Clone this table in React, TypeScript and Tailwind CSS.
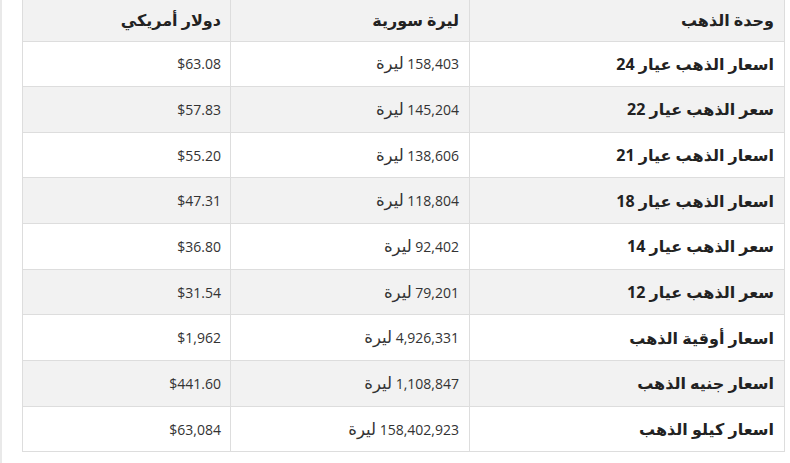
const rows = [
  { unit: "اسعار الذهب عيار 24", syp: "158,403", usd: "$63.08" },
  { unit: "سعر الذهب عيار 22", syp: "145,204", usd: "$57.83" },
  { unit: "اسعار الذهب عيار 21", syp: "138,606", usd: "$55.20" },
  { unit: "اسعار الذهب عيار 18", syp: "118,804", usd: "$47.31" },
  { unit: "سعر الذهب عيار 14", syp: "92,402", usd: "$36.80" },
  { unit: "سعر الذهب عيار 12", syp: "79,201", usd: "$31.54" },
  { unit: "اسعار أوقية الذهب", syp: "4,926,331", usd: "$1,962" },
  { unit: "اسعار جنيه الذهب", syp: "1,108,847", usd: "$441.60" },
  { unit: "اسعار كيلو الذهب", syp: "158,402,923", usd: "$63,084" },
];

export default function App() {
  return (
    <div
      className="h-[463px] w-[790px] overflow-hidden bg-white border-l-2 border-[#e9e9e9] text-[#222]"
      style={{ fontFamily: '"Open Sans", "DejaVu Sans", sans-serif' }}
    >
      <div className="pl-[20px]">
        <table dir="rtl" className="w-[763px] table-fixed border-collapse text-[14px]">
          <thead>
            <tr className="h-[41px] bg-[#f2f2f2]">
              <th className="w-[315px] border-x border-b border-[#dddddd] px-[10px] text-right text-[16px] font-bold">وحدة الذهب</th>
              <th className="w-[239px] border-x border-b border-[#dddddd] px-[10px] text-right text-[16px] font-bold">ليرة سورية</th>
              <th className="border-x border-b border-[#dddddd] px-[9px] text-right text-[16px] font-bold">دولار أمريكي</th>
            </tr>
          </thead>
          <tbody>
            {rows.map((r, i) => (
              <tr key={r.unit} className={i % 2 === 1 ? "h-[45.67px] bg-[#f2f2f2]" : "h-[45.67px] bg-white"}>
                <td className="border border-[#dddddd] px-[10px] text-right text-[16px] font-bold">{r.unit}</td>
                <td className="border border-[#dddddd] px-[10px] text-right text-[#333]">
                  {r.syp} <span className="text-[16.5px]">ليرة</span>
                </td>
                <td className="border border-[#dddddd] px-[9px] text-right text-[#333]">{r.usd}</td>
              </tr>
            ))}
          </tbody>
        </table>
      </div>
    </div>
  );
}
